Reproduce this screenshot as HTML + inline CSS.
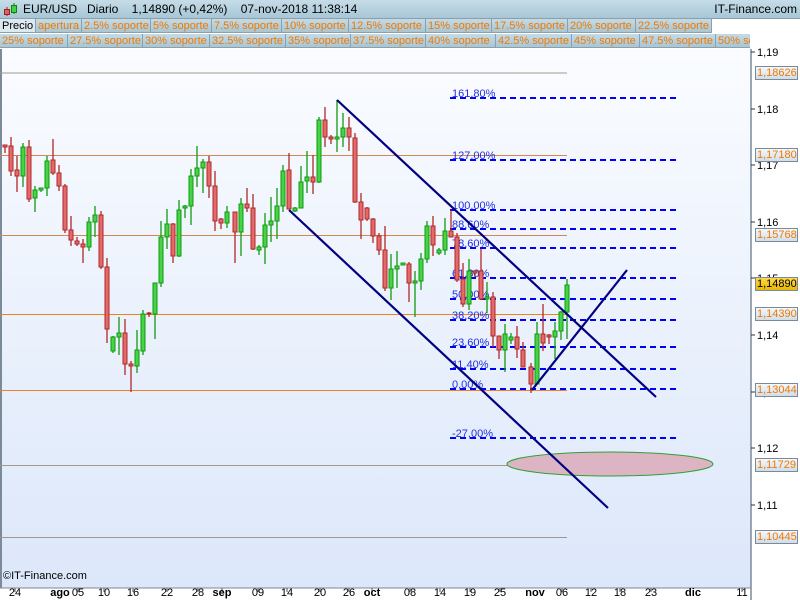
<!DOCTYPE html>
<html><head><meta charset="utf-8"><style>
body{margin:0;width:800px;height:600px;overflow:hidden;background:#fff;font-family:"Liberation Sans",sans-serif;position:relative}
.hdr{position:absolute;left:0;top:0;width:800px;height:18px;background:linear-gradient(#c6dde8,#a7c6d6);font-size:12px;line-height:18px;border-bottom:1px solid #8aa0ad}
.row{position:absolute;left:0;width:750px;height:15px;font-size:11px;line-height:15px;white-space:nowrap;overflow:hidden}
.row span{position:absolute;top:0;height:14px;background:linear-gradient(#c4dbe6,#a9c6d4);border-right:1px solid #8aa0ad;border-bottom:1px solid #8aa0ad;color:#f07800;padding-left:2px;box-sizing:border-box}
.ax{position:absolute;font-size:11px}
.bx{position:absolute;left:755px;width:43px;height:14px;border:1px solid #7a8a99;box-sizing:border-box;background:linear-gradient(#f4f8fc,#cfdeea);color:#f07800;font-size:11px;line-height:12px;padding-left:1px}
.dt{position:absolute;top:587px;font-size:11px;transform:translateX(-50%)}
</style></head><body>
<div class="hdr"><svg style="position:absolute;left:3px;top:2px" width="14" height="15"><line x1="4" y1="5" x2="4" y2="14" stroke="#a02020"/><rect x="1.5" y="7.5" width="5" height="5" fill="#e06060" stroke="#a02020"/><line x1="11" y1="1" x2="11" y2="12" stroke="#108010"/><rect x="8.5" y="3.5" width="5" height="7" fill="#40d040" stroke="#108010"/></svg>
<span style="position:absolute;left:23px">EUR/USD&nbsp;&nbsp;&nbsp;Diario&nbsp;&nbsp;&nbsp;&nbsp;1,14890 (+0,42%)&nbsp;&nbsp;&nbsp;&nbsp;07-nov-2018 11:38:14</span>
<span style="position:absolute;right:3px">IT-Finance.com</span></div>
<div class="row" style="top:19px"><span style="left:0;width:36px;color:#000;background:#dde9f0">Precio</span><span style="left:36px;width:46px">apertura</span><span style="left:82px;width:69px">2.5% soporte</span><span style="left:151px;width:61px">5% soporte</span><span style="left:212px;width:70px">7.5% soporte</span><span style="left:282px;width:67px">10% soporte</span><span style="left:349px;width:77px">12.5% soporte</span><span style="left:426px;width:66px">15% soporte</span><span style="left:492px;width:76px">17.5% soporte</span><span style="left:568px;width:68px">20% soporte</span><span style="left:636px;width:76px">22.5% soporte</span></div>
<div class="row" style="top:34px"><span style="left:0;width:68px">25% soporte</span><span style="left:68px;width:75px">27.5% soporte</span><span style="left:143px;width:67px">30% soporte</span><span style="left:210px;width:76px">32.5% soporte</span><span style="left:286px;width:65px">35% soporte</span><span style="left:351px;width:75px">37.5% soporte</span><span style="left:426px;width:70px">40% soporte</span><span style="left:496px;width:76px">42.5% soporte</span><span style="left:572px;width:68px">45% soporte</span><span style="left:640px;width:76px">47.5% soporte</span><span style="left:716px;width:40px">50% soporte</span></div>
<svg style="position:absolute;left:0;top:0" width="800" height="600">
<defs><linearGradient id="g" x1="0" y1="0" x2="0" y2="1"><stop offset="0" stop-color="#fafcff"/><stop offset="1" stop-color="#dce7fa"/></linearGradient></defs>
<rect x="1" y="49" width="750" height="539" fill="url(#g)"/>
<line x1="1" y1="49" x2="1" y2="588" stroke="#7a8a99" stroke-width="2"/>
<line x1="751" y1="49" x2="751" y2="600" stroke="#7a8a99" stroke-width="1.5"/>
<line x1="0" y1="588" x2="751" y2="588" stroke="#7a8a99"/>
<g stroke-width="1"><line x1="0" y1="73" x2="567" y2="73" stroke="#a09890"/><line x1="0" y1="155.5" x2="567" y2="155.5" stroke="#d08a50"/><line x1="0" y1="235.5" x2="567" y2="235.5" stroke="#d08a50"/><line x1="0" y1="314.5" x2="567" y2="314.5" stroke="#f08020"/><line x1="0" y1="390.5" x2="567" y2="390.5" stroke="#f08020"/><line x1="0" y1="465.5" x2="567" y2="465.5" stroke="#a09890"/><line x1="0" y1="537.5" x2="567" y2="537.5" stroke="#a09890"/></g>
<g stroke="#0000ff" stroke-width="2" stroke-dasharray="6,4"><line x1="450" y1="98" x2="680" y2="98"/><line x1="450" y1="160" x2="680" y2="160"/><line x1="450" y1="210" x2="680" y2="210"/><line x1="450" y1="229" x2="680" y2="229"/><line x1="450" y1="248" x2="680" y2="248"/><line x1="450" y1="278" x2="680" y2="278"/><line x1="450" y1="299" x2="680" y2="299"/><line x1="450" y1="320" x2="680" y2="320"/><line x1="450" y1="347" x2="680" y2="347"/><line x1="450" y1="369" x2="680" y2="369"/><line x1="450" y1="389" x2="680" y2="389"/><line x1="450" y1="438" x2="680" y2="438"/></g>
<g fill="#2030e0" font-size="11" font-family="Liberation Sans"><text x="452" y="97">161,80%</text><text x="452" y="159">127,00%</text><text x="452" y="209">100,00%</text><text x="452" y="228">88,60%</text><text x="452" y="247">78,60%</text><text x="452" y="277">61,80%</text><text x="452" y="298">50,00%</text><text x="452" y="319">38,20%</text><text x="452" y="346">23,60%</text><text x="452" y="368">11,40%</text><text x="452" y="388">0,00%</text><text x="452" y="437">-27,00%</text></g>
<ellipse cx="610" cy="464" rx="103" ry="12" fill="#dcb4c4" stroke="#30a030"/>
<g id="c"></g>
<g stroke="#000080" stroke-width="2.2" fill="none"><line x1="337" y1="100" x2="656" y2="397"/><line x1="289" y1="210" x2="608" y2="508"/><line x1="532" y1="390" x2="627" y2="270"/></g>
<g font-size="11" font-family="Liberation Sans"><text x="3" y="579">©IT-Finance.com</text></g>
<g stroke="#333"><line x1="751" y1="52" x2="755" y2="52"/><line x1="751" y1="109" x2="755" y2="109"/><line x1="751" y1="165" x2="755" y2="165"/><line x1="751" y1="222" x2="755" y2="222"/><line x1="751" y1="278" x2="755" y2="278"/><line x1="751" y1="335" x2="755" y2="335"/><line x1="751" y1="392" x2="755" y2="392"/><line x1="751" y1="448" x2="755" y2="448"/><line x1="751" y1="505" x2="755" y2="505"/></g>
<g font-size="11" font-family="Liberation Sans"><text x="757" y="56">1,19</text><text x="757" y="113">1,18</text><text x="757" y="169">1,17</text><text x="757" y="226">1,16</text><text x="757" y="282">1,15</text><text x="757" y="339">1,14</text><text x="757" y="396">1,13</text><text x="757" y="452">1,12</text><text x="757" y="509">1,11</text></g>
<g stroke="#555"><line x1="15" y1="588" x2="15" y2="592"/><line x1="78" y1="588" x2="78" y2="592"/><line x1="104" y1="588" x2="104" y2="592"/><line x1="133" y1="588" x2="133" y2="592"/><line x1="167" y1="588" x2="167" y2="592"/><line x1="198" y1="588" x2="198" y2="592"/><line x1="222" y1="588" x2="222" y2="592"/><line x1="258" y1="588" x2="258" y2="592"/><line x1="287" y1="588" x2="287" y2="592"/><line x1="320" y1="588" x2="320" y2="592"/><line x1="349" y1="588" x2="349" y2="592"/><line x1="372" y1="588" x2="372" y2="592"/><line x1="410" y1="588" x2="410" y2="592"/><line x1="440" y1="588" x2="440" y2="592"/><line x1="470" y1="588" x2="470" y2="592"/><line x1="500" y1="588" x2="500" y2="592"/><line x1="562" y1="588" x2="562" y2="592"/><line x1="591" y1="588" x2="591" y2="592"/><line x1="620" y1="588" x2="620" y2="592"/><line x1="651" y1="588" x2="651" y2="592"/><line x1="742" y1="588" x2="742" y2="592"/></g>
</svg>
<div class="bx" style="top:66px">1,18626</div>
<div class="bx" style="top:148px">1,17180</div>
<div class="bx" style="top:228px">1,15768</div>
<div class="bx" style="top:277px;background:linear-gradient(#ffd84a,#e8b800);color:#000">1,14890</div>
<div class="bx" style="top:307px">1,14390</div>
<div class="bx" style="top:383px">1,13044</div>
<div class="bx" style="top:458px">1,11729</div>
<div class="bx" style="top:530px">1,10445</div>
<div class="dt" style="left:15px">24</div><div class="dt" style="left:60px;font-weight:bold">ago</div><div class="dt" style="left:78px">05</div><div class="dt" style="left:104px">10</div><div class="dt" style="left:133px">16</div><div class="dt" style="left:167px">22</div><div class="dt" style="left:198px">28</div><div class="dt" style="left:222px;font-weight:bold">sep</div><div class="dt" style="left:258px">09</div><div class="dt" style="left:287px">14</div><div class="dt" style="left:320px">20</div><div class="dt" style="left:349px">26</div><div class="dt" style="left:372px;font-weight:bold">oct</div><div class="dt" style="left:410px">08</div><div class="dt" style="left:440px">14</div><div class="dt" style="left:470px">19</div><div class="dt" style="left:500px">25</div><div class="dt" style="left:535px;font-weight:bold">nov</div><div class="dt" style="left:562px">06</div><div class="dt" style="left:591px">12</div><div class="dt" style="left:620px">18</div><div class="dt" style="left:651px">23</div><div class="dt" style="left:693px;font-weight:bold">dic</div><div class="dt" style="left:742px">11</div>
<script>
var d=[
[5,'r',145,153,145,147],[11,'r',137,176,146,171],[17,'r',156,192,170,176],[23,'g',143,187,147,176],[29,'r',140,202,147,199],[35,'g',186,212,190,198],[41,'g',188,192,188,190],[47,'g',156,196,161,188],[53,'r',139,175,160,173],[59,'r',165,191,173,186],[65,'r',184,233,186,230],[71,'r',216,246,230,240],[77,'r',237,246,241,244],[83,'r',239,263,244,247],[89,'g',217,251,222,247],[95,'g',206,237,215,222],[101,'r',211,269,215,267],[107,'r',258,343,267,329],[113,'g',336,353,337,351],[119,'g',317,355,333,337],[125,'r',319,375,333,364],[131,'r',361,392,364,366],[137,'g',330,373,350,366],[143,'g',310,355,314,351],[149,'r',312,317,313,314],[155,'g',283,339,283,314],[161,'g',221,287,237,283],[167,'g',209,249,224,237],[173,'r',223,263,224,256],[179,'g',200,257,210,256],[185,'g',205,218,206,208],[191,'g',169,225,176,206],[197,'g',146,187,168,176],[203,'g',159,193,162,168],[209,'r',156,198,162,186],[215,'r',171,231,186,221],[221,'r',218,229,219,223],[227,'g',206,228,212,223],[235,'r',212,263,212,232],[241,'g',198,256,204,232],[247,'r',188,212,204,208],[253,'r',194,250,208,249],[259,'g',245,255,247,250],[265,'g',213,264,225,247],[271,'g',197,242,221,225],[277,'g',188,239,206,221],[283,'g',165,212,171,206],[289,'r',153,209,170,209],[295,'g',207,212,208,211],[301,'g',166,208,182,208],[307,'g',151,193,177,181],[313,'r',155,194,177,182],[319,'g',117,183,120,182],[325,'r',107,147,120,137],[331,'r',135,144,137,139],[337,'g',100,152,137,139],[343,'g',113,147,128,137],[349,'r',117,151,128,137],[355,'r',133,203,138,202],[361,'r',193,239,202,220],[367,'r',207,221,208,219],[373,'r',218,243,219,236],[379,'r',233,255,236,250],[385,'r',226,291,250,288],[391,'g',254,300,269,288],[397,'g',251,288,266,269],[403,'g',263,265,263,265],[409,'r',262,302,264,283],[415,'g',271,317,281,283],[421,'g',253,290,259,281],[427,'g',221,263,226,259],[433,'r',216,256,226,245],[439,'g',248,255,250,253],[445,'g',218,255,231,250],[451,'r',210,237,231,237],[457,'r',233,282,237,280],[463,'r',263,307,279,304],[469,'g',259,310,271,304],[475,'r',270,277,271,273],[481,'r',249,300,271,299],[487,'g',282,313,297,299],[493,'r',292,347,297,336],[499,'r',336,359,336,350],[505,'g',324,372,334,350],[511,'g',333,344,337,340],[517,'r',326,358,337,349],[523,'r',342,367,350,367],[531,'r',363,393,367,384],[537,'g',322,384,334,384],[543,'r',304,351,334,343],[549,'r',334,344,335,337],[555,'g',322,359,331,337],[561,'g',311,340,312,331],[567,'g',279,339,285,312]];
var s='';d.forEach(function(c){var st=c[1]=='r'?'#b02828':'#109a10',f=c[1]=='r'?'#e46a6a':'#46d446';s+='<line x1="'+c[0]+'" y1="'+c[2]+'" x2="'+c[0]+'" y2="'+c[3]+'" stroke="'+st+'" stroke-width="1.3"/><rect x="'+(c[0]-2)+'" y="'+c[4]+'" width="4" height="'+Math.max(1,c[5]-c[4])+'" fill="'+f+'" stroke="'+st+'"/>';});
document.getElementById('c').innerHTML=s;
</script>
</body></html>
